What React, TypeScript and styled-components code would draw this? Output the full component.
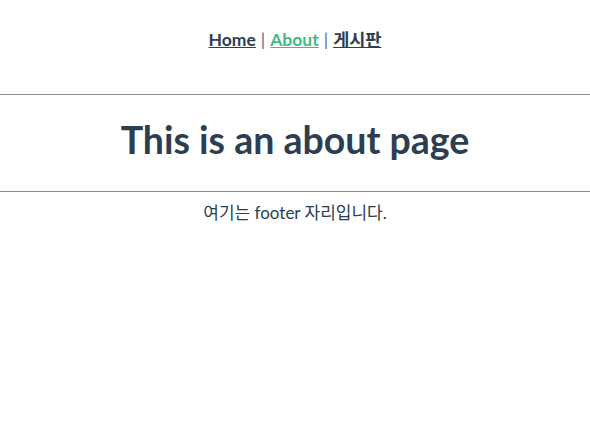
import React from 'react';
import styled, { createGlobalStyle } from 'styled-components';

const GlobalStyle = createGlobalStyle`
  html, body {
    margin: 0;
    padding: 0;
    background: #ffffff;
  }
  body {
    font-family: Lato, "Noto Sans CJK KR", "Noto Sans", sans-serif;
    -webkit-font-smoothing: antialiased;
  }
`;

const AppRoot = styled.div`
  color: #2c3e50;
  text-align: center;
`;

const Nav = styled.nav`
  padding: 30px;
  font-size: 17.5px;
  line-height: 20px;
  font-weight: 700;
`;

const NavLink = styled.a<{ $active?: boolean }>`
  color: ${(p) => (p.$active ? '#42b983' : '#2c3e50')};
  text-decoration: underline;
  cursor: pointer;
`;

const Sep = styled.span`
  font-weight: 400;
  color: #5a6674;
  margin: 0 5px;
`;

const Rule = styled.hr<{ $top?: number }>`
  border: none;
  border-top: 1px solid #8e8e8e;
  margin: ${(p) => p.$top ?? 0}px 0 0;
  height: 0;
`;

const Title = styled.h1`
  margin: 0;
  padding-bottom: 6px;
  font-size: 37.5px;
  line-height: 90px;
  font-weight: 700;
`;

const Footer = styled.footer`
  padding-top: 11px;
  font-size: 17px;
  line-height: 20px;
`;

export default function App() {
  return (
    <AppRoot>
      <GlobalStyle />
      <Nav>
        <NavLink>Home</NavLink>
        <Sep>|</Sep>
        <NavLink $active>About</NavLink>
        <Sep>|</Sep>
        <NavLink>게시판</NavLink>
      </Nav>
      <Rule $top={14} />
      <Title>This is an about page</Title>
      <Rule />
      <Footer>여기는 footer 자리입니다.</Footer>
    </AppRoot>
  );
}
